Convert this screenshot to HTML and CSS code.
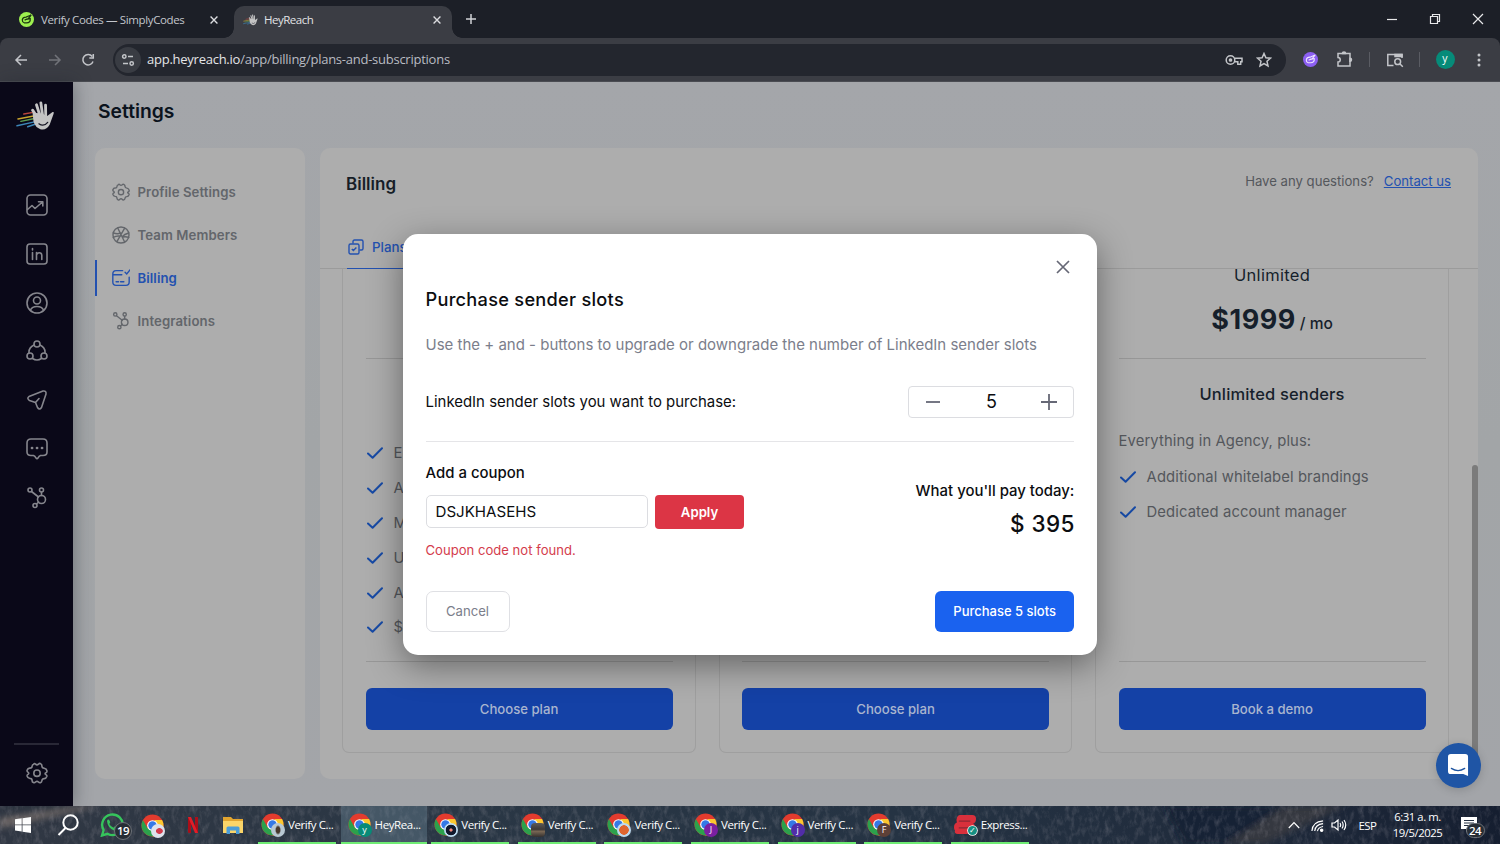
FILE: index.html
```html
<!DOCTYPE html>
<html lang="en">
<head>
<meta charset="utf-8">
<title>HeyReach</title>
<link rel="stylesheet" href="styles.css">
</head>
<body>
<svg class="defs" width="0" height="0">
  <defs>
    <symbol id="gear" viewBox="0 0 22 22"><path d="M7.6 2.2 Q8.6 .9 9.5 2.2 Q11 3.6 12.5 2.2 Q13.6 .9 14.8 1.9 Q16 2.6 15.9 4.2 Q16 6 18.2 6.2 Q20.6 6.6 21 9 Q21.2 10.4 19.6 11 Q18.6 11.6 19.6 12.4 Q21.2 13 20.8 14.4 Q20 16.6 18.2 16.6 Q16.2 16.6 15.9 18.6 Q15.7 20.2 14.4 20.7 Q13.2 21 12.5 20 Q11 18.6 9.5 20 Q8.6 21.1 7.4 20.6 Q6 20 6.1 18.4 Q6 16.4 3.8 16.4 Q1.6 16.2 1.1 14 Q.9 12.8 2.2 12.2 Q3.4 11.2 2.2 10.4 Q.7 9.6 1.1 8.2 Q1.8 6 3.8 6.1 Q6 6.2 6.1 4.2 Q6.2 2.6 7.6 2.2Z"/><circle cx="11" cy="11.2" r="3.2"/></symbol>
    <symbol id="hub" viewBox="0 0 22 22"><circle cx="4" cy="3" r="2"/><circle cx="15.5" cy="3" r="2"/><circle cx="15.5" cy="12.5" r="4"/><circle cx="9" cy="18.5" r="2"/><path d="M5.500 4.500l7 5.500M15.500 5v3.500M10.400 17l2.300-2"/></symbol>
    <symbol id="hand" viewBox="0 0 40 32"><g fill="none" stroke-width="1.500" stroke-linecap="round"><path stroke="#b9453c" d="M8 14l11-2"/><path stroke="#c9a52e" d="M2 19l16-3"/><path stroke="#5c9d51" d="M5 21.500l14-3"/><path stroke="#3d86b8" d="M1 26l18-4M12 27l9-3"/></g><g fill="none" stroke="#c4c4c4" stroke-linecap="round" stroke-width="2.900"><path d="M23 19L17 10M25 17L21 4.500M27.500 17L25.500 2.500M30.500 17L30.300 5"/></g><path fill="#c4c4c4" d="M17 13Q26 12 32 16L37.500 12Q39.600 11.500 38.500 14L34.500 25Q31 31 25 29.500Q20 28 18 22Z"/><path d="M23.500 24q5 3.500 9-1.500" fill="none" stroke="#171625" stroke-width="1.300"/></symbol>
    <symbol id="chrome" viewBox="0 0 24 24"><circle cx="12" cy="12" r="11.500" fill="#e33b2e"/><path d="M2 6.300A11.500 11.500 0 0 0 12 23.500L17.200 15H7Z" fill="#2ca14c"/><path d="M22 6.300A11.500 11.500 0 0 1 12 23.500L17.300 14.500L14 6.300Z" fill="#fcc72f"/><circle cx="12" cy="12" r="5.600" fill="#fff"/><circle cx="12" cy="12" r="4.400" fill="#3579e6"/></symbol>
    <symbol id="check" viewBox="0 0 16 12"><path d="M1 6.500l4.600 4.300L15 1.300" fill="none" stroke="#174aa5" stroke-width="2" stroke-linecap="round" stroke-linejoin="round"/></symbol>
    <symbol id="pen" viewBox="0 0 16 16"><path d="M3.500 8.500Q4 5.500 7.500 5.500L13 3.200L9.500 7.500L12 7Q12.500 11.500 8 11.500H5.500Q3.500 11 3.500 8.500ZM6 8.700l3-1.500"/></symbol>
    <symbol id="close" viewBox="0 0 14 14"><path d="M1 1l12 12M13 1L1 13"/></symbol>
  </defs>
</svg>

<div class="screen">
  <header class="tabstrip">
    <div class="tab tab-first">
      <svg class="fav" viewBox="0 0 16 16"><circle cx="8" cy="8" r="8" fill="#9df04f"/><use href="#pen" fill="none" stroke="#1c3512" stroke-width="1.300"/></svg>
      <span class="tab-title title-first">Verify Codes — SimplyCodes</span>
      <svg class="tab-x"><use href="#close"/></svg>
    </div>
    <div class="tab tab-active">
      <svg class="fav fav-hand"><use href="#hand"/></svg>
      <span class="tab-title">HeyReach</span>
      <svg class="tab-x"><use href="#close"/></svg>
    </div>
    <svg class="new-tab" viewBox="0 0 10 10"><path d="M5 0v10M0 5h10"/></svg>
    <div class="win-controls">
      <svg viewBox="0 0 12 12"><path d="M1 6.500h10"/></svg>
      <svg viewBox="0 0 12 12"><path d="M1.500 3.500h7v7h-7zM3.500 3.500v-2h7v7h-2"/></svg>
      <svg viewBox="0 0 12 12"><path d="M1 1l10 10M11 1L1 11"/></svg>
    </div>
  </header>

  <div class="toolbar">
    <svg class="nav-ico" viewBox="0 0 14 14"><path d="M13 7H2M7 2L2 7l5 5"/></svg>
    <svg class="nav-ico dim" viewBox="0 0 14 14"><path d="M1 7h11M7 2l5 5-5 5"/></svg>
    <svg class="nav-ico" viewBox="0 0 14 14"><path d="M12 8.500A5.200 5.200 0 1 1 11.200 3.500M12.300 1v4H8.300"/></svg>
    <div class="omnibox">
      <span class="site-btn"><svg viewBox="0 0 14 14"><path d="M7 3.500h5M2 10.500h5"/><circle cx="3.300" cy="3.500" r="1.700"/><circle cx="10.700" cy="10.500" r="1.700"/></svg></span>
      <span class="url"><b>app.heyreach.io</b>/app/billing/plans-and-subscriptions</span>
      <svg class="key" viewBox="0 0 18 12"><circle cx="5.500" cy="6" r="4.300"/><circle cx="5.500" cy="6" r="1.100" fill="#c3c5c9"/><path d="M9.600 4.200H17v3.600h-1.300v2.400h-2.900V7.800H9.600"/></svg>
      <svg class="star" viewBox="0 0 16 16"><path d="M8 1.500l1.900 4.300 4.600.4-3.500 3.100 1 4.600L8 11.500l-4 2.400 1-4.600L1.500 6.200l4.600-.4Z"/></svg>
    </div>
    <svg class="ext" viewBox="0 0 16 16"><circle cx="8" cy="8" r="8" fill="#8c5ff2" stroke="none"/><use href="#pen" fill="none" stroke="#eee6ff" stroke-width="1.200"/></svg>
    <svg class="puzzle" viewBox="0 0 18 18"><path d="M2 3.500h12V16H2v-4a2.200 2.200 0 0 0 0-4.500Z"/><path d="M6.400 3.500a1.600 1.600 0 0 1 3.200 0zM14 8.200a1.500 1.500 0 0 1 0 3z" fill="#c3c5c9"/></svg>
    <i class="sep"></i>
    <svg class="lens" viewBox="0 0 18 16"><path d="M7.500 13.500H1.800V2.500H16V6"/><path d="M9 2.500h7v2H9z" fill="#c3c5c9"/><circle cx="11.700" cy="9.700" r="2.900"/><path d="M13.800 11.800l3 3"/></svg>
    <i class="sep sep-2"></i>
    <span class="avatar">y</span>
    <svg class="dots" viewBox="0 0 4 14"><circle cx="2" cy="2" r="1.500"/><circle cx="2" cy="7" r="1.500"/><circle cx="2" cy="12" r="1.500"/></svg>
  </div>

  <div class="app">
    <nav class="rail">
      <svg class="logo"><use href="#hand"/></svg>
      <div class="rail-icons">
        <svg viewBox="0 0 22 22"><rect x="1" y="1" width="20" height="20" rx="3.500"/><path d="M1.500 15.500l4.500-4 3 3L16.500 8M12.500 7.700h4.300V12"/></svg>
        <svg viewBox="0 0 22 22"><rect x="1" y="1" width="20" height="20" rx="3"/><path d="M6.500 9.500v7M6.500 5.500v1.500M10.500 16.500v-7M10.500 12Q11 9.800 13.300 9.800T15.800 12.300V16.500"/></svg>
        <svg viewBox="0 0 22 22"><circle cx="11" cy="11" r="10"/><circle cx="11" cy="8.500" r="3.500"/><path d="M4.500 18Q6 14.500 11 14.500T17.500 18"/></svg>
        <svg viewBox="0 0 22 22"><circle cx="11" cy="4" r="3"/><circle cx="4" cy="16" r="3"/><circle cx="18" cy="16" r="3"/><path d="M8 5Q2.500 7.500 3 13M14 5Q19.500 7.500 19 13M6.500 18.500Q11 21.500 15.500 18.500"/></svg>
        <svg viewBox="0 0 22 22"><path d="M3 7.500L17 2Q20.500 1.500 20 5L15.500 18.500Q13.500 21.500 11.500 18.500L9.500 13.500L3.500 11.500Q.5 9.500 3 7.500ZM9.500 13.500L13 9.500"/></svg>
        <svg viewBox="0 0 22 22"><path d="M5 1h12q4 0 4 4v9q0 3.500-4 3.500h-2.500Q13 18 12 20q-1 1.300-2 0Q9 18 7.500 17.500H5Q1 17.500 1 14V5Q1 1 5 1Z"/><path d="M6 10h.1M11 10h.1M16 10h.1" stroke-width="2.700"/></svg>
        <svg><use href="#hub"/></svg>
      </div>
      <i class="rail-line"></i>
      <svg class="rail-gear"><use href="#gear"/></svg>
    </nav>

    <main class="main">
      <h1 class="page-title">Settings</h1>
      <div class="columns">
        <aside class="side">
          <a class="side-item"><svg><use href="#gear"/></svg>Profile Settings</a>
          <a class="side-item"><svg viewBox="0 0 22 22"><circle cx="11" cy="11" r="9.800"/><path d="M7 2.500L15.500 19.500M15.500 2.500L6 19M1.500 8.500Q7 10.500 10.500 8.500M20.500 8.500Q15 10 12.500 13M1.500 14Q6 11.500 10 12.500M20.500 14Q17 12.500 13 13.500"/></svg>Team Members</a>
          <a class="side-item side-active"><svg viewBox="0 0 22 22"><path d="M13 2H5Q1 2 1 6v10q0 4 4 4h12q4 0 4-4v-6M1 7h11M16 4l2 2 4-5M5 15.500h3M10.500 15.500h4"/></svg>Billing</a>
          <a class="side-item"><svg><use href="#hub"/></svg>Integrations</a>
        </aside>

        <section class="panel">
          <div class="panel-head">
            <div class="head-row">
              <h2>Billing</h2>
              <p>Have any questions?<a>Contact us</a></p>
            </div>
            <div class="tabs"><a class="plan-tab"><svg viewBox="0 0 16 16"><rect x="1" y="5" width="10" height="10" rx="1.500"/><path d="M5 4.500V2.500Q5 1 6.500 1h7Q15 1 15 2.500v7Q15 11 13.500 11h-2M3.800 10l1.600 1.600 3-3"/></svg>Plans</a></div>
          </div>
          <div class="plans">
            <article class="plan">
              <div class="plan-top"></div>
              <ul class="plan-list list-long">
                <li><svg><use href="#check"/></svg>E</li>
                <li><svg><use href="#check"/></svg>A</li>
                <li><svg><use href="#check"/></svg>M</li>
                <li><svg><use href="#check"/></svg>U</li>
                <li><svg><use href="#check"/></svg>A</li>
                <li><svg><use href="#check"/></svg>$</li>
              </ul>
              <div class="plan-foot"><button class="cta">Choose plan</button></div>
            </article>
            <article class="plan">
              <div class="plan-top"></div>
              <ul class="plan-list"></ul>
              <div class="plan-foot"><button class="cta">Choose plan</button></div>
            </article>
            <article class="plan">
              <div class="plan-top">
                <div class="plan-name">Unlimited</div>
                <div class="price"><b>$1999</b><span>/ mo</span></div>
              </div>
              <div class="senders">Unlimited senders</div>
              <div class="plus">Everything in Agency, plus:</div>
              <ul class="plan-list">
                <li><svg><use href="#check"/></svg>Additional whitelabel brandings</li>
                <li><svg><use href="#check"/></svg>Dedicated account manager</li>
              </ul>
              <div class="plan-foot"><button class="cta">Book a demo</button></div>
            </article>
            <i class="scrollbar"></i>
          </div>
        </section>
      </div>
    </main>

    <div class="modal">
      <div class="modal-close"><svg><use href="#close"/></svg></div>
      <h3>Purchase sender slots</h3>
      <p class="desc">Use the + and - buttons to upgrade or downgrade the number of LinkedIn sender slots</p>
      <div class="slots">
        <span>LinkedIn sender slots you want to purchase:</span>
        <div class="stepper">
          <svg viewBox="0 0 16 16"><path d="M1 8h14"/></svg>
          <b>5</b>
          <svg viewBox="0 0 16 16"><path d="M0 8h16M8 0v16"/></svg>
        </div>
      </div>
      <div class="pay-area">
        <div class="coupon">
          <label>Add a coupon</label>
          <div class="coupon-row"><div class="field">DSJKHASEHS</div><button class="apply">Apply</button></div>
          <div class="error">Coupon code not found.</div>
        </div>
        <div class="total"><span>What you'll pay today:</span><b>$ 395</b></div>
      </div>
      <div class="modal-foot">
        <button class="cancel">Cancel</button>
        <button class="buy">Purchase 5 slots</button>
      </div>
    </div>

    <div class="chat"><svg viewBox="0 0 22 24"><path d="M3 0h15q3 0 3 3v20l-5-2H3q-3 0-3-3V3q0-3 3-3Z" fill="#fff"/><path d="M3.500 15q7 4.500 14 0" fill="none" stroke="#1d539f" stroke-width="1.300" stroke-linecap="round"/></svg></div>
  </div>

  <footer class="taskbar">
    <svg class="scenery" viewBox="0 0 1500 38" preserveAspectRatio="none">
      <defs>
        <linearGradient id="dusk" x1="0" x2="1" y1="0" y2="0"><stop offset="0" stop-color="#303743"/><stop offset=".3" stop-color="#2a3745"/><stop offset=".6" stop-color="#253343"/><stop offset=".85" stop-color="#1f2a3b"/><stop offset="1" stop-color="#151e30"/></linearGradient>
        <filter id="trees" x="0" y="0" width="100%" height="100%"><feTurbulence type="fractalNoise" baseFrequency=".2 .1" numOctaves="4" seed="7"/><feColorMatrix values="0 0 0 0 .45  0 0 0 0 .42  0 0 0 0 .46  1.900 0 0 0 -.85"/></filter>
        <filter id="soft"><feGaussianBlur stdDeviation="3"/></filter>
      </defs>
      <rect width="1500" height="38" fill="url(#dusk)"/>
      <g filter="url(#soft)"><path d="M0 12L75 0H100L60 9L0 22Z" fill="#6d6665"/><path d="M1165 0h120l-50 38h-50Z" fill="#172434"/><path d="M1285 0h60l-80 38h-40Z" fill="#36373f"/></g>
      <rect width="1500" height="38" filter="url(#trees)" opacity=".28"/>
    </svg>
    <div class="pins">
      <svg class="win" viewBox="0 0 16 16"><path fill="#fff" d="M0 2.300l6.700-1v6.200H0zM7.500 1.200L16 0v7.500H7.500zM0 8.300h6.700v6.200L0 13.600zM7.500 8.300H16V16l-8.500-1.300z"/></svg>
      <svg class="search" viewBox="0 0 22 22"><circle cx="13.500" cy="8.500" r="7.200"/><path d="M8.500 14L1.500 21"/></svg>
      <div class="pin-badge"><svg viewBox="0 0 24 24"><path d="M2 22.500l1.600-5.500A10.300 10.300 0 1 1 7.500 20.800Z" fill="none" stroke="#36c45c" stroke-width="2.400"/><path d="M7 8q1-2.500 2.500-.5l.8 2-1 1.500q1.500 3 4.300 3.800l1.500-1.600 2.800 1.500q0 3-3.800 2.700Q7.500 15 7 8Z" fill="#36c45c"/></svg><span>19</span></div>
      <div class="chrome-pin"><svg><use href="#chrome"/></svg><i class="mini mini-heart"></i></div>
      <svg class="netflix" viewBox="0 0 10 16"><path d="M0 0h3v16l-3-.300zM7 0h3v16l-3-.300z" fill="#a90f19"/><path d="M0 0h3l7 16H7z" fill="#e21d28"/></svg>
      <svg class="folder" viewBox="0 0 22 19"><path d="M1 1h8l2 2h10v5H1z" fill="#e2a52f"/><path d="M1 5h20v12H1z" fill="#fbd569"/><path d="M4.500 18v-6q0-1.500 1.500-1.500h10q1.500 0 1.500 1.500v6h-3.500v-3.500h-6V18Z" fill="#4b9dd9"/></svg>
    </div>
    <div class="tasks">
      <div class="task"><span class="chrome-pin"><svg><use href="#chrome"/></svg><i class="mini mini-photo"></i></span>Verify C...</div>
      <div class="task task-on"><span class="chrome-pin"><svg><use href="#chrome"/></svg><i class="mini mini-y">y</i></span>HeyRea...</div>
      <div class="task"><span class="chrome-pin"><svg><use href="#chrome"/></svg><i class="mini mini-dot"></i></span>Verify C...</div>
      <div class="task"><span class="chrome-pin"><svg><use href="#chrome"/></svg><i class="mini mini-stone"></i></span>Verify C...</div>
      <div class="task"><span class="chrome-pin"><svg><use href="#chrome"/></svg><i class="mini mini-ball"></i></span>Verify C...</div>
      <div class="task"><span class="chrome-pin"><svg><use href="#chrome"/></svg><i class="mini mini-j">J</i></span>Verify C...</div>
      <div class="task"><span class="chrome-pin"><svg><use href="#chrome"/></svg><i class="mini mini-i">j</i></span>Verify C...</div>
      <div class="task"><span class="chrome-pin"><svg><use href="#chrome"/></svg><i class="mini mini-f">F</i></span>Verify C...</div>
      <div class="task"><span class="chrome-pin"><svg viewBox="0 0 24 24"><path d="M6 2h13q4 0 4 4t-3 5q3 2 1 5-1 2-4 2 0 4-4 4H4q-4 0-3-4-1-1-1-3 0-4 3-5-1-2 0-5 1-3 3-3Z" fill="#d9303c"/><path d="M5 8.500h12M5 15.500h12" stroke="#8c2733" stroke-width="1.300"/></svg><i class="mini mini-ok">✓</i></span>Express...</div>
    </div>
    <div class="tray">
      <svg class="chev" viewBox="0 0 12 8"><path d="M.8 7L6 1.500 11.200 7"/></svg>
      <svg class="wifi" viewBox="0 0 14 14"><path d="M1 13Q1.500 3 13 2M4 13Q4.500 6 13 5M7 13Q7.500 9 13 8"/><circle cx="11.500" cy="12" r="1.300" fill="#fff"/></svg>
      <svg class="vol" viewBox="0 0 16 14"><path d="M1 5h2.500L7 2v10L3.500 9H1ZM9 5q1.300 2 0 4M11 3.500q2.300 3.500 0 7M13 2q3.500 5 0 10"/></svg>
      <span class="lang">ESP</span>
      <div class="clock">6:31 a. m.<br>19/5/2025</div>
      <div class="notes"><svg viewBox="0 0 16 16"><path d="M0 0h16v12H8l-3 3v-3H0Z" fill="#fff"/><path d="M3 3.500h10M3 6h10M3 8.500h6" stroke="#253143" stroke-width="1"/></svg><span>24</span></div>
    </div>
  </footer>
</div>
</body>
</html>
```
FILE: styles.css
```css
* { box-sizing: border-box; }
body { margin: 0; background: #1c1f27; font-family: Inter, "Liberation Sans", sans-serif; }
h1, h2, h3, p, ul { margin: 0; padding: 0; }
ul { list-style: none; }
svg { display: block; flex: none; }
i { font-style: normal; }
button { font: inherit; border: 0; padding: 0; }
.defs { position: absolute; }
.screen { width: 1500px; height: 844px; display: flex; flex-direction: column; overflow: hidden; }

/* browser tabs */
.tabstrip { height: 38px; background: #1c1f27; display: flex; padding: 6px 0 0; font-family: "Open Sans", "Noto Sans", sans-serif; }
.tab { display: flex; align-items: center; height: 32px; padding-bottom: 5px; }
.tab-first { width: 234px; padding-left: 18.500px; padding-right: 16px; }
.tab-active { width: 218px; background: #3b3d44; border-radius: 10px 10px 0 0; padding-left: 9px; padding-right: 11px; position: relative; }
.tab-active::before, .tab-active::after { content: ""; position: absolute; bottom: 0; width: 10px; height: 10px; }
.tab-active::before { left: -10px; background: radial-gradient(circle at 0 0, transparent 9.500px, #3b3d44 10px); }
.tab-active::after { right: -10px; background: radial-gradient(circle at 100% 0, transparent 9.500px, #3b3d44 10px); }
.fav { width: 15px; height: 15px; }
.fav-hand { height: 12px; }
.tab-title { font-size: 11.500px; color: #e2e3e6; margin-left: 6px; flex: 1; letter-spacing: -.5px; white-space: nowrap; }
.title-first { color: #c3c6cc; margin-left: 7.500px; letter-spacing: -.36px; }
.tab-x { width: 8px; height: 8px; stroke: #dcdde0; stroke-width: 2.400; }
.new-tab { width: 10px; height: 10px; margin: 8px 0 0 13.500px; stroke: #d0d2d6; stroke-width: 1.500; }
.win-controls { margin: 7px 16px 0 auto; display: flex; gap: 31px; }
.win-controls svg { width: 12px; height: 12px; fill: none; stroke: #e8e8ea; stroke-width: 1.200; }

/* address bar */
.toolbar { height: 44px; background: #3b3d44; border-bottom: 1px solid #4a4c52; border-radius: 8px 8px 0 0; display: flex; align-items: center; padding: 0 18px 0 14px; font-family: "Open Sans", "Noto Sans", sans-serif; }
.toolbar svg { fill: none; stroke: #c3c5c9; stroke-width: 1.500; }
.nav-ico { width: 14px; height: 14px; margin-right: 19.500px; }
.nav-ico.dim { opacity: .4; }
.omnibox { width: 1173px; height: 32px; margin-left: -2px; border-radius: 16px; background: #23262e; display: flex; align-items: center; padding: 0 14px 0 2px; }
.site-btn { width: 26px; height: 26px; border-radius: 50%; background: #393c43; display: grid; place-items: center; }
.site-btn svg { width: 14px; height: 14px; }
.url { flex: 1; margin-left: 6.500px; padding-bottom: 2px; font-size: 13px; color: #b9bcc2; letter-spacing: -.25px; }
.url b { font-weight: 400; color: #e4e5e8; }
.key { width: 18px; height: 12px; margin-right: 13px; }
.star { width: 16px; height: 16px; }
.ext { width: 15px; height: 15px; margin-left: 17px; }
.puzzle { width: 18px; height: 18px; margin-left: 18px; margin-top: -2px; }
.sep { width: 1px; height: 15px; background: #5a5c63; margin-left: 15px; }
.lens { width: 18px; height: 16px; margin-left: 16px; }
.avatar { width: 19px; height: 19px; border-radius: 50%; background: #068b79; color: #fff; font-size: 10.500px; line-height: 17px; text-align: center; margin-left: 16px; }
.toolbar .dots { width: 4px; height: 14px; fill: #c3c5c9; stroke: none; margin-left: 22px; }

/* application */
.app { height: 724px; display: flex; position: relative; background: linear-gradient(#a4a6aa, #a2a5a7 50%, #a3a5a9); }
.rail { width: 73px; background: #0a0818; display: flex; flex-direction: column; align-items: center; padding-top: 18px; box-shadow: 2px 0 16px rgba(30, 35, 45, .36); z-index: 1; }
.rail svg { fill: none; stroke: #86868d; stroke-width: 1.600; stroke-linecap: round; stroke-linejoin: round; width: 22px; height: 22px; }
.rail .logo { width: 39px; height: 32px; stroke: none; margin-right: 2px; }
.rail-icons { display: flex; flex-direction: column; gap: 26.800px; margin-top: 62px; }
.rail-line { width: 45px; height: 2px; background: #292836; margin-top: auto; }
.rail-gear { margin: 17px 0 22px; }
.main { flex: 1; padding: 0 22px 27px; display: flex; flex-direction: column; }
.page-title { height: 66px; padding: 17px 0 0 3px; font-size: 19.300px; line-height: 24px; font-weight: 600; color: #0b131d; }
.columns { flex: 1; display: flex; gap: 15px; }
.side { width: 210px; background: #adadad; border-radius: 10px; padding-top: 26px; display: flex; flex-direction: column; gap: 7.100px; }
.side-item { height: 36px; display: flex; align-items: center; gap: 7.500px; padding-left: 15px; border-left: 2px solid transparent; font-size: 13.200px; font-weight: 600; color: #63666b; letter-spacing: .09px; }
.side-item svg { width: 18px; height: 18px; fill: none; stroke: #63666b; stroke-width: 1.700; stroke-linecap: round; }
.side-active { color: #2351b0; border-color: #2351b0; }
.side-active svg { stroke: #2351b0; }

.panel { width: 1158px; background: #adadad; border-radius: 10px; overflow: hidden; display: flex; flex-direction: column; }
.panel-head { height: 121px; border-bottom: 1px solid #9b9b9b; display: flex; flex-direction: column; justify-content: space-between; padding: 24px 27px 0 26px; }
.head-row { display: flex; justify-content: space-between; }
.head-row h2 { font-size: 17px; line-height: 24px; font-weight: 600; color: #161d27; }
.head-row p { font-size: 13.150px; line-height: 18px; color: #54575c; }
.head-row a { color: #2351b0; text-decoration: underline; margin-left: 10px; }
.tabs { display: flex; margin-bottom: -1px; }
.plan-tab { display: flex; gap: 8px; height: 31px; width: 120px; margin-left: 1px; padding-left: 1px; color: #2351b0; font-size: 13.300px; line-height: 18px; font-weight: 500; border-bottom: 1.500px solid #2351b0; }
.plan-tab svg { width: 16px; height: 16px; margin-top: 1px; fill: none; stroke: #2351b0; stroke-width: 1.400; }
.plans { flex: 1; display: flex; gap: 23px; padding: 0 0 26px 22px; position: relative; }
.plan { width: 353.500px; border: 1px solid #9f9f9f; border-top: 0; border-radius: 0 0 7px 7px; padding: 0 22px 0 22.600px; display: flex; flex-direction: column; }
.plan-top { height: 90px; border-bottom: 1px solid #979797; text-align: center; color: #161f2b; overflow: hidden; }
.plan-name { margin-top: -6px; font-size: 16.500px; line-height: 24px; letter-spacing: .3px; }
.price { margin-top: 15px; line-height: 36px; display: flex; justify-content: center; align-items: baseline; gap: 4px; }
.price b { font-size: 27px; font-weight: 700; letter-spacing: .5px; }
.price span { font-size: 15.500px; font-weight: 500; }
.senders { margin-top: 23px; text-align: center; font-size: 16.500px; line-height: 24px; font-weight: 500; color: #161f2b; letter-spacing: .15px; }
.plus { margin-top: 24px; font-size: 14.800px; line-height: 22px; color: #54575c; letter-spacing: .1px; }
.plan-list { flex: 1; margin-top: 8px; }
.list-long { margin-top: 77px; }
.plan-list li { display: flex; align-items: center; gap: 11px; height: 34.800px; padding-left: 1px; font-size: 14.800px; color: #54575c; white-space: nowrap; letter-spacing: .1px; }
.plan-list svg { width: 16px; height: 12px; }
.plan-foot { border-top: 1px solid #979797; padding: 26px 0 22px; }
.cta { width: 100%; height: 42px; display: block; border-radius: 6px; background: #1441a6; color: #a9b5cf; font-size: 13.150px; font-weight: 500; }
.scrollbar { position: absolute; right: 0; top: 196px; width: 6px; bottom: 20px; border-radius: 3px 3px 0 0; background: #7b7b7b; }

/* purchase dialog */
.modal { position: absolute; z-index: 2; left: 403px; top: 152px; width: 694px; height: 421px; border-radius: 15px; background: #fff; padding: 0 22.600px 0 22.500px; color: #0c0d10; box-shadow: 0 10px 34px rgba(0, 0, 0, .42); display: flex; flex-direction: column; }
.modal-close { height: 51px; padding: 26px 4.400px 0 0; display: flex; justify-content: flex-end; }
.modal-close svg { width: 14px; height: 14px; stroke: #666876; stroke-width: 1.700; }
.modal h3 { font-size: 18.200px; line-height: 28px; font-weight: 500; letter-spacing: .27px; }
.desc { margin-top: 19px; font-size: 15px; line-height: 25px; color: #7b7e8b; }
.slots { margin-top: 29px; height: 32px; display: flex; justify-content: space-between; align-items: center; font-size: 14.950px; }
.slots > span { line-height: 18px; padding-bottom: 1px; }
.stepper { width: 166px; height: 32px; border: 1px solid #dcdde1; border-radius: 4px; display: flex; align-items: center; justify-content: space-between; padding: 0 16px; }
.stepper svg { width: 16px; height: 16px; stroke: #666876; stroke-width: 1.800; }
.stepper b { font-size: 18px; font-weight: 400; padding-bottom: 1px; }
.pay-area { margin-top: 23px; border-top: 1px solid #e5e5e8; display: flex; justify-content: space-between; }
.coupon label { display: block; margin-top: 19px; font-size: 14.950px; line-height: 24px; font-weight: 500; }
.coupon-row { display: flex; gap: 7px; margin-top: 10px; }
.field { width: 222.500px; height: 33px; border: 1px solid #dcdde1; border-radius: 5px; padding-left: 9px; font-size: 15.100px; line-height: 31px; }
.apply { width: 89px; height: 34px; border-radius: 4px; background: #dc3545; color: #fff; font-size: 13.200px; font-weight: 600; }
.error { margin-top: 10px; font-size: 13.100px; line-height: 22px; color: #d43c4c; }
.total { display: flex; flex-direction: column; align-items: flex-end; margin-top: 37px; }
.total span { font-size: 14.950px; line-height: 24px; font-weight: 500; }
.total b { font-size: 22.500px; font-weight: 500; line-height: 28px; margin-top: 7px; letter-spacing: .4px; margin-right: -.4px; }
.modal-foot { margin-top: 30px; display: flex; justify-content: space-between; }
.modal-foot button { padding-bottom: 1px; }
.cancel { width: 84px; height: 41px; border: 1.500px solid #dfe0e4; border-radius: 7px; background: #fff; color: #7b7e8b; font-size: 13.150px; }
.buy { width: 139.500px; height: 41px; border-radius: 6px; background: #1a62ef; color: #fff; font-size: 13px; font-weight: 500; }

.chat { position: absolute; z-index: 2; right: 19px; top: 661px; width: 45px; height: 45px; border-radius: 50%; background: #1f55a5; display: grid; place-items: center; box-shadow: 0 2px 10px rgba(0, 0, 0, .16); }
.chat svg { width: 21px; height: 23px; }

/* desktop taskbar */
.taskbar { height: 38px; display: flex; position: relative; color: #fff; font-family: "Open Sans", "Noto Sans", sans-serif; font-size: 12px; background: #253241; }
.scenery { position: absolute; inset: 0; width: 1500px; height: 38px; }
.pins, .tasks, .tray { position: relative; display: flex; align-items: center; }
.pins { width: 258px; padding-left: 14.500px; }
.win { width: 16px; height: 16px; }
.search { width: 22px; height: 22px; margin-left: 26px; fill: none; stroke: #fff; stroke-width: 2; }
.pin-badge { margin-left: 21.500px; position: relative; width: 24px; }
.pin-badge svg { width: 24px; height: 24px; }
.pin-badge span, .notes span { position: absolute; left: 14px; top: 9px; width: 18px; height: 18px; border-radius: 50%; background: #272d35; border: 1px solid #6c7178; font-size: 11.500px; font-weight: 600; line-height: 15px; text-align: center; letter-spacing: -.5px; }
.pins .chrome-pin { margin-left: 17px; }
.chrome-pin { position: relative; width: 23px; height: 23px; flex: none; }
.chrome-pin svg { width: 23px; height: 23px; }
.netflix { width: 10px; height: 16px; margin-left: 24px; }
.folder { width: 22px; height: 19px; margin-left: 24px; }
.mini { position: absolute; left: 10px; top: 10px; width: 14px; height: 14px; border-radius: 50%; font-size: 9px; line-height: 13px; text-align: center; letter-spacing: 0; }
.mini-heart { background: radial-gradient(ellipse at 60% 50%, #d23a4b 3px, #dce2ec 3.800px); }
.mini-photo { background: radial-gradient(ellipse 3px 5px, #46372c 60%, #b8c8d3 100%); }
.mini-y { background: #078b78; }
.mini-dot { background: radial-gradient(circle, #f28a7c 1.200px, #10182c 2px 5px, #bcd9ee 5.600px); }
.mini-stone { background: linear-gradient(#5b5a59, #3c3937 45%, #786653 60%, #33302f); border-radius: 4px; }
.mini-ball { background: radial-gradient(circle, #df652f 4.500px, #bcd9ee 5px); }
.mini-j { background: #7b1fa2; }
.mini-i { background: #512da8; }
.mini-f { background: #5d4037; }
.mini-ok { width: 9px; height: 9px; left: 14px; top: 13px; background: #168f83; font-size: 8px; line-height: 8px; box-shadow: 0 0 0 .8px #fff; }
.tasks { gap: 8.600px; }
.task { width: 78px; height: 38px; display: flex; align-items: center; gap: 4px; padding-left: 3px; border-bottom: 2.500px solid #6fec74; white-space: nowrap; font-size: 11.500px; letter-spacing: -.4px; }
.task-on { width: 86px; margin: 0 -4px; padding-left: 7px; background: rgba(105, 130, 148, .42); }
.tray { margin-left: auto; padding-right: 11.500px; }
.tray svg { fill: none; stroke: #fff; stroke-width: 1.200; }
.chev { width: 12px; height: 8px; }
.wifi { width: 13px; height: 13px; margin-left: 11px; }
.vol { width: 16px; height: 14px; margin-left: 7px; }
.lang { margin-left: 11px; font-size: 11.500px; letter-spacing: -.5px; }
.clock { width: 52px; margin-left: 15px; text-align: center; font-size: 11.300px; line-height: 16.500px; letter-spacing: -.45px; }
.notes { position: relative; width: 28px; height: 16px; margin-left: 17px; }
.notes svg { width: 16px; height: 16px; stroke: none; }
.notes span { left: 5px; top: 6px; width: 19px; height: 15px; border-radius: 8px; line-height: 13px; }
```
